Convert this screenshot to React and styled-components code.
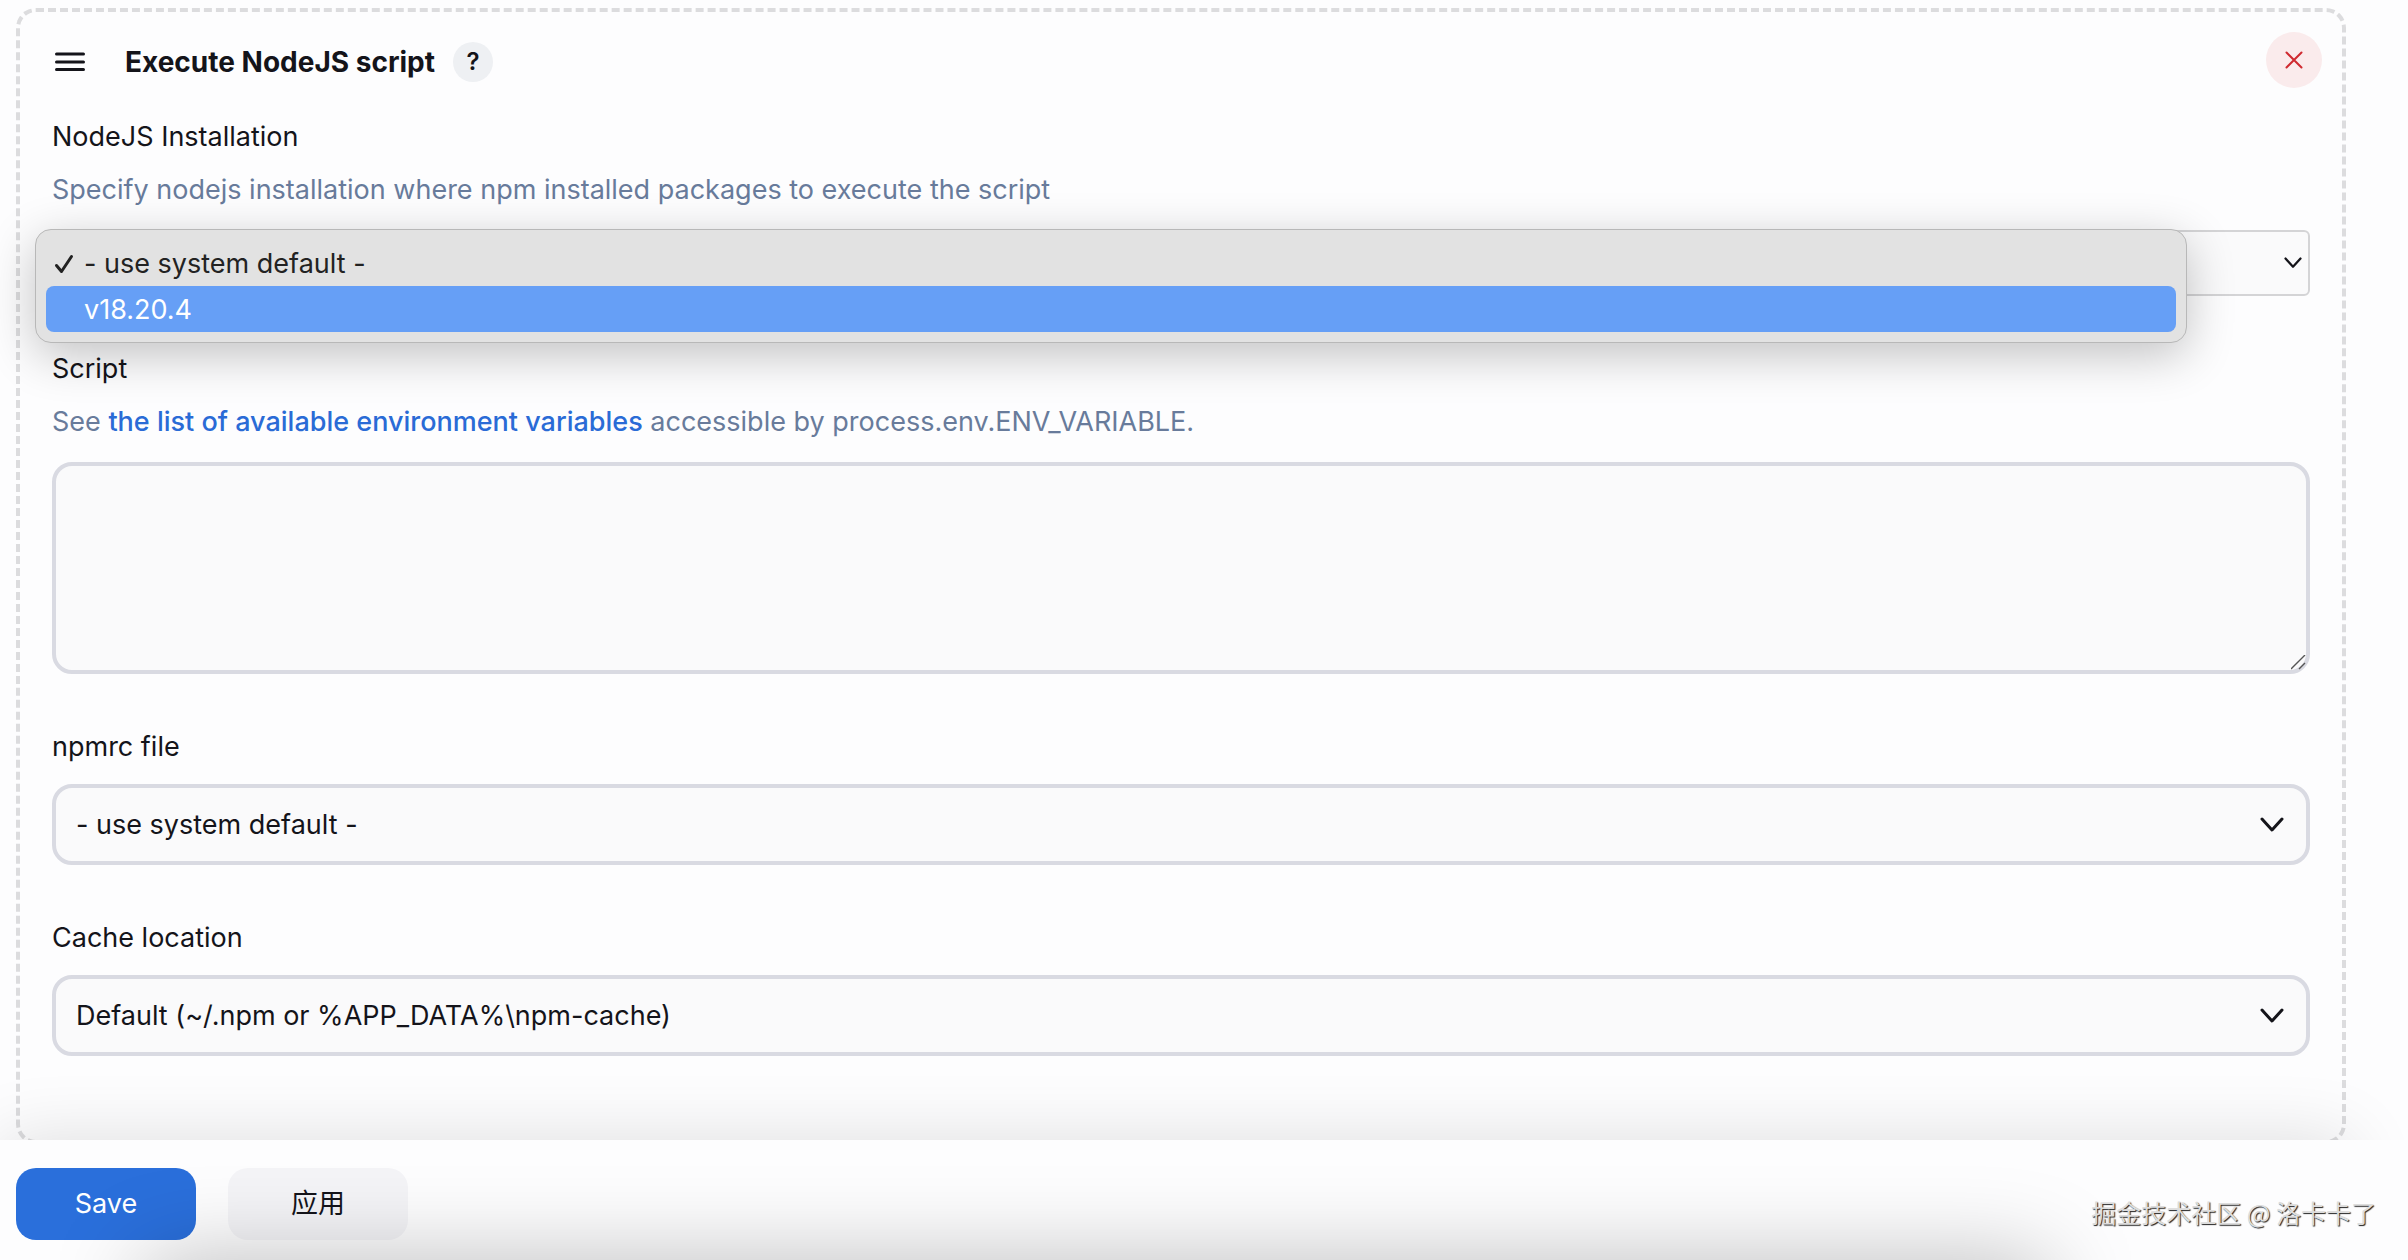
import React from 'react';
import styled, { createGlobalStyle, css } from 'styled-components';

const GlobalStyle = createGlobalStyle`
  * {
    box-sizing: border-box;
  }

  body {
    margin: 0;
    background: #fdfdfe;
    color: #14141a;
    font-family: Inter, 'Noto Sans CJK SC', sans-serif;
    font-size: 27px;
    line-height: 40px;
  }
`;

const Page = styled.div`
  min-height: 100vh;
  display: flex;
  flex-direction: column;
  overflow: hidden;
`;

const Content = styled.main`
  padding: 8px 62px 0 16px;
`;

const StepCard = styled.section`
  padding: 20px 32px 84px;
  border: 4px dashed #dcdcde;
  border-radius: 20px;
`;

const StepHeader = styled.header`
  display: flex;
  align-items: center;
  height: 60px;
  margin: 0 -12px 25px 0;
`;

const DragHandle = styled.button`
  display: flex;
  padding: 0;
  margin-right: 36px;
  border: 0;
  background: none;
  color: #14141a;
  cursor: move;
`;

const StepTitle = styled.h2`
  margin: 0;
  font-size: 28px;
  font-weight: 700;
`;

const HelpButton = styled.button`
  width: 40px;
  height: 40px;
  margin-left: 18px;
  padding: 0;
  border: 0;
  border-radius: 50%;
  background: #eef0f3;
  color: #14141a;
  font: 600 24px/40px Inter, sans-serif;
`;

const RemoveButton = styled.button`
  display: flex;
  align-items: center;
  justify-content: center;
  align-self: flex-start;
  width: 56px;
  height: 56px;
  margin-left: auto;
  padding: 0;
  border: 0;
  border-radius: 50%;
  background: #faebec;
  color: #cf2a30;
`;

const Fields = styled.div`
  display: flex;
  flex-direction: column;
  gap: 53px;
`;

const Field = styled.div`
  display: flex;
  flex-direction: column;
`;

const Label = styled.label`
  align-self: flex-start;
`;

const Description = styled.p`
  margin: 13px 0 3px;
  color: #687b9b;

  a {
    color: #2a6bd6;
    font-weight: 500;
    text-decoration: none;
  }
`;

const SelectWrap = styled.div`
  position: relative;
  margin-top: 17px;
`;

const Select = styled.select`
  display: block;
  width: 100%;
  height: ${props => (props.$plain ? '66px' : '81px')};
  padding: 0 ${props => (props.$plain ? '36px' : '60px')} 0 20px;
  border: ${props => (props.$plain ? '2px solid #d4d4d6' : '4px solid #d9dae2')};
  border-radius: ${props => (props.$plain ? '6px' : '20px')};
  background: #fafafb;
  color: inherit;
  font: inherit;
  appearance: none;
`;

const Chevron = styled.svg`
  position: absolute;
  top: 50%;
  right: ${props => (props.$plain ? '8px' : '26px')};
  transform: translateY(-50%);
  pointer-events: none;
`;

const Menu = styled.ul`
  position: absolute;
  z-index: 1;
  top: -1px;
  left: -17px;
  right: 123px;
  margin: 0;
  padding: 10px;
  border: 1px solid #b8b8b8;
  border-radius: 16px;
  background: #e2e2e2;
  box-shadow: 0 12px 48px rgba(0, 0, 0, 0.24);
  list-style: none;
`;

const MenuItem = styled.li`
  display: flex;
  align-items: center;
  height: 46px;
  padding: 2px 0 0 8px;
  border-radius: 8px;
  color: #222;

  ${props => props.$active && css`
    background: #669ff6;
    color: #fff;
  `}
`;

const CheckSlot = styled.span`
  display: flex;
  width: 30px;
`;

const resizeGrip = `url("data:image/svg+xml,%3Csvg xmlns='http://www.w3.org/2000/svg' width='15' height='15' stroke='%23555' stroke-width='1.4'%3E%3Cpath d='M0 14L14 0M8 14L14 8'/%3E%3C/svg%3E")`;

const TextArea = styled.textarea`
  display: block;
  width: 100%;
  height: 212px;
  margin-top: 17px;
  padding: 16px 20px;
  border: 4px solid #d9dae2;
  border-radius: 20px;
  background: #fafafb;
  color: inherit;
  font: inherit;
  resize: vertical;

  &::-webkit-resizer {
    background: ${resizeGrip} no-repeat right bottom;
  }
`;

const BottomBar = styled.footer`
  position: relative;
  z-index: 2;
  flex: 1;
  display: flex;
  align-items: flex-start;
  gap: 32px;
  margin-top: -4px;
  padding: 28px 32px 20px 16px;
  background: #fdfdfe;

  &::before {
    content: '';
    position: absolute;
    inset: 0 58px 0 0;
    box-shadow: 0 0 70px rgba(0, 0, 0, 0.13);
    clip-path: inset(-80px -80px 100% -80px);
    pointer-events: none;
  }

  &::after {
    content: '';
    position: absolute;
    top: 100%;
    left: 6%;
    right: 15%;
    height: 100px;
    box-shadow: 0 0 90px rgba(0, 0, 0, 0.26);
    pointer-events: none;
  }
`;

const Button = styled.button`
  min-width: 180px;
  height: 72px;
  border: 0;
  border-radius: 20px;
  background: ${props => (props.$primary ? '#2a6fdb' : '#f4f4f7')};
  color: ${props => (props.$primary ? '#fff' : '#14141a')};
  font: inherit;
`;

const Credit = styled.span`
  margin: 24px 0 0 auto;
  color: #ddd;
  font: 25px/40px 'Noto Sans CJK SC', sans-serif;
  text-shadow: 1px 1px 1px #222;
`;

const ArrowIcon = ({ plain }) => (
  <Chevron
    $plain={plain}
    width={plain ? 18 : 24}
    height={plain ? 12 : 16}
    viewBox="0 0 24 16"
    fill="none"
    stroke="#14141a"
    strokeWidth="3"
    strokeLinecap="round"
    strokeLinejoin="round"
    aria-hidden="true"
  >
    <path d="M2 2l10 11L22 2" />
  </Chevron>
);

const installations = ['- use system default -', 'v18.20.4'];

const App = () => (
  <>
    <GlobalStyle />
    <Page>
      <Content>
        <StepCard>
          <StepHeader>
            <DragHandle type="button" aria-label="Drag step">
              <svg width="37" height="24" viewBox="0 0 37 24" stroke="currentColor" strokeWidth="3" strokeLinecap="round">
                <path d="M4.500 4h27M4.500 12h27M4.500 19.500h27" />
              </svg>
            </DragHandle>
            <StepTitle>Execute NodeJS script</StepTitle>
            <HelpButton type="button" aria-label="Help">?</HelpButton>
            <RemoveButton type="button" aria-label="Remove step">
              <svg width="18" height="18" viewBox="0 0 18 18" stroke="currentColor" strokeWidth="2" strokeLinecap="round">
                <path d="M1.500 1.500l15 15M16.500 1.500l-15 15" />
              </svg>
            </RemoveButton>
          </StepHeader>

          <Fields>
            <Field>
              <Label htmlFor="installation">NodeJS Installation</Label>
              <Description>
                Specify nodejs installation where npm installed packages to execute the script
              </Description>
              <SelectWrap>
                <Select id="installation" $plain defaultValue={installations[0]}>
                  {installations.map(name => (
                    <option key={name}>{name}</option>
                  ))}
                </Select>
                <ArrowIcon plain />
                <Menu role="listbox" aria-label="NodeJS Installation">
                  {installations.map((name, i) => (
                    <MenuItem key={name} role="option" aria-selected={i === 0} $active={i === 1}>
                      <CheckSlot>
                        {i === 0 && (
                          <svg width="20" height="20" viewBox="0 0 20 20" fill="none" stroke="currentColor" strokeWidth="3" strokeLinecap="round" strokeLinejoin="round">
                            <path d="M2.500 11.500l5 6L17.500 2.500" />
                          </svg>
                        )}
                      </CheckSlot>
                      {name}
                    </MenuItem>
                  ))}
                </Menu>
              </SelectWrap>
            </Field>

            <Field>
              <Label htmlFor="script">Script</Label>
              <Description>
                See <a href="#env">the list of available environment variables</a> accessible by
                process.env.ENV_VARIABLE.
              </Description>
              <TextArea id="script" />
            </Field>

            <Field>
              <Label htmlFor="npmrc">npmrc file</Label>
              <SelectWrap>
                <Select id="npmrc">
                  <option>- use system default -</option>
                </Select>
                <ArrowIcon />
              </SelectWrap>
            </Field>

            <Field>
              <Label htmlFor="cache">Cache location</Label>
              <SelectWrap>
                <Select id="cache">
                  <option>Default (~/.npm or %APP_DATA%\npm-cache)</option>
                </Select>
                <ArrowIcon />
              </SelectWrap>
            </Field>
          </Fields>
        </StepCard>
      </Content>

      <BottomBar>
        <Button type="submit" $primary>Save</Button>
        <Button type="button">应用</Button>
        <Credit>掘金技术社区 @ 洛卡卡了</Credit>
      </BottomBar>
    </Page>
  </>
);

export default App;
